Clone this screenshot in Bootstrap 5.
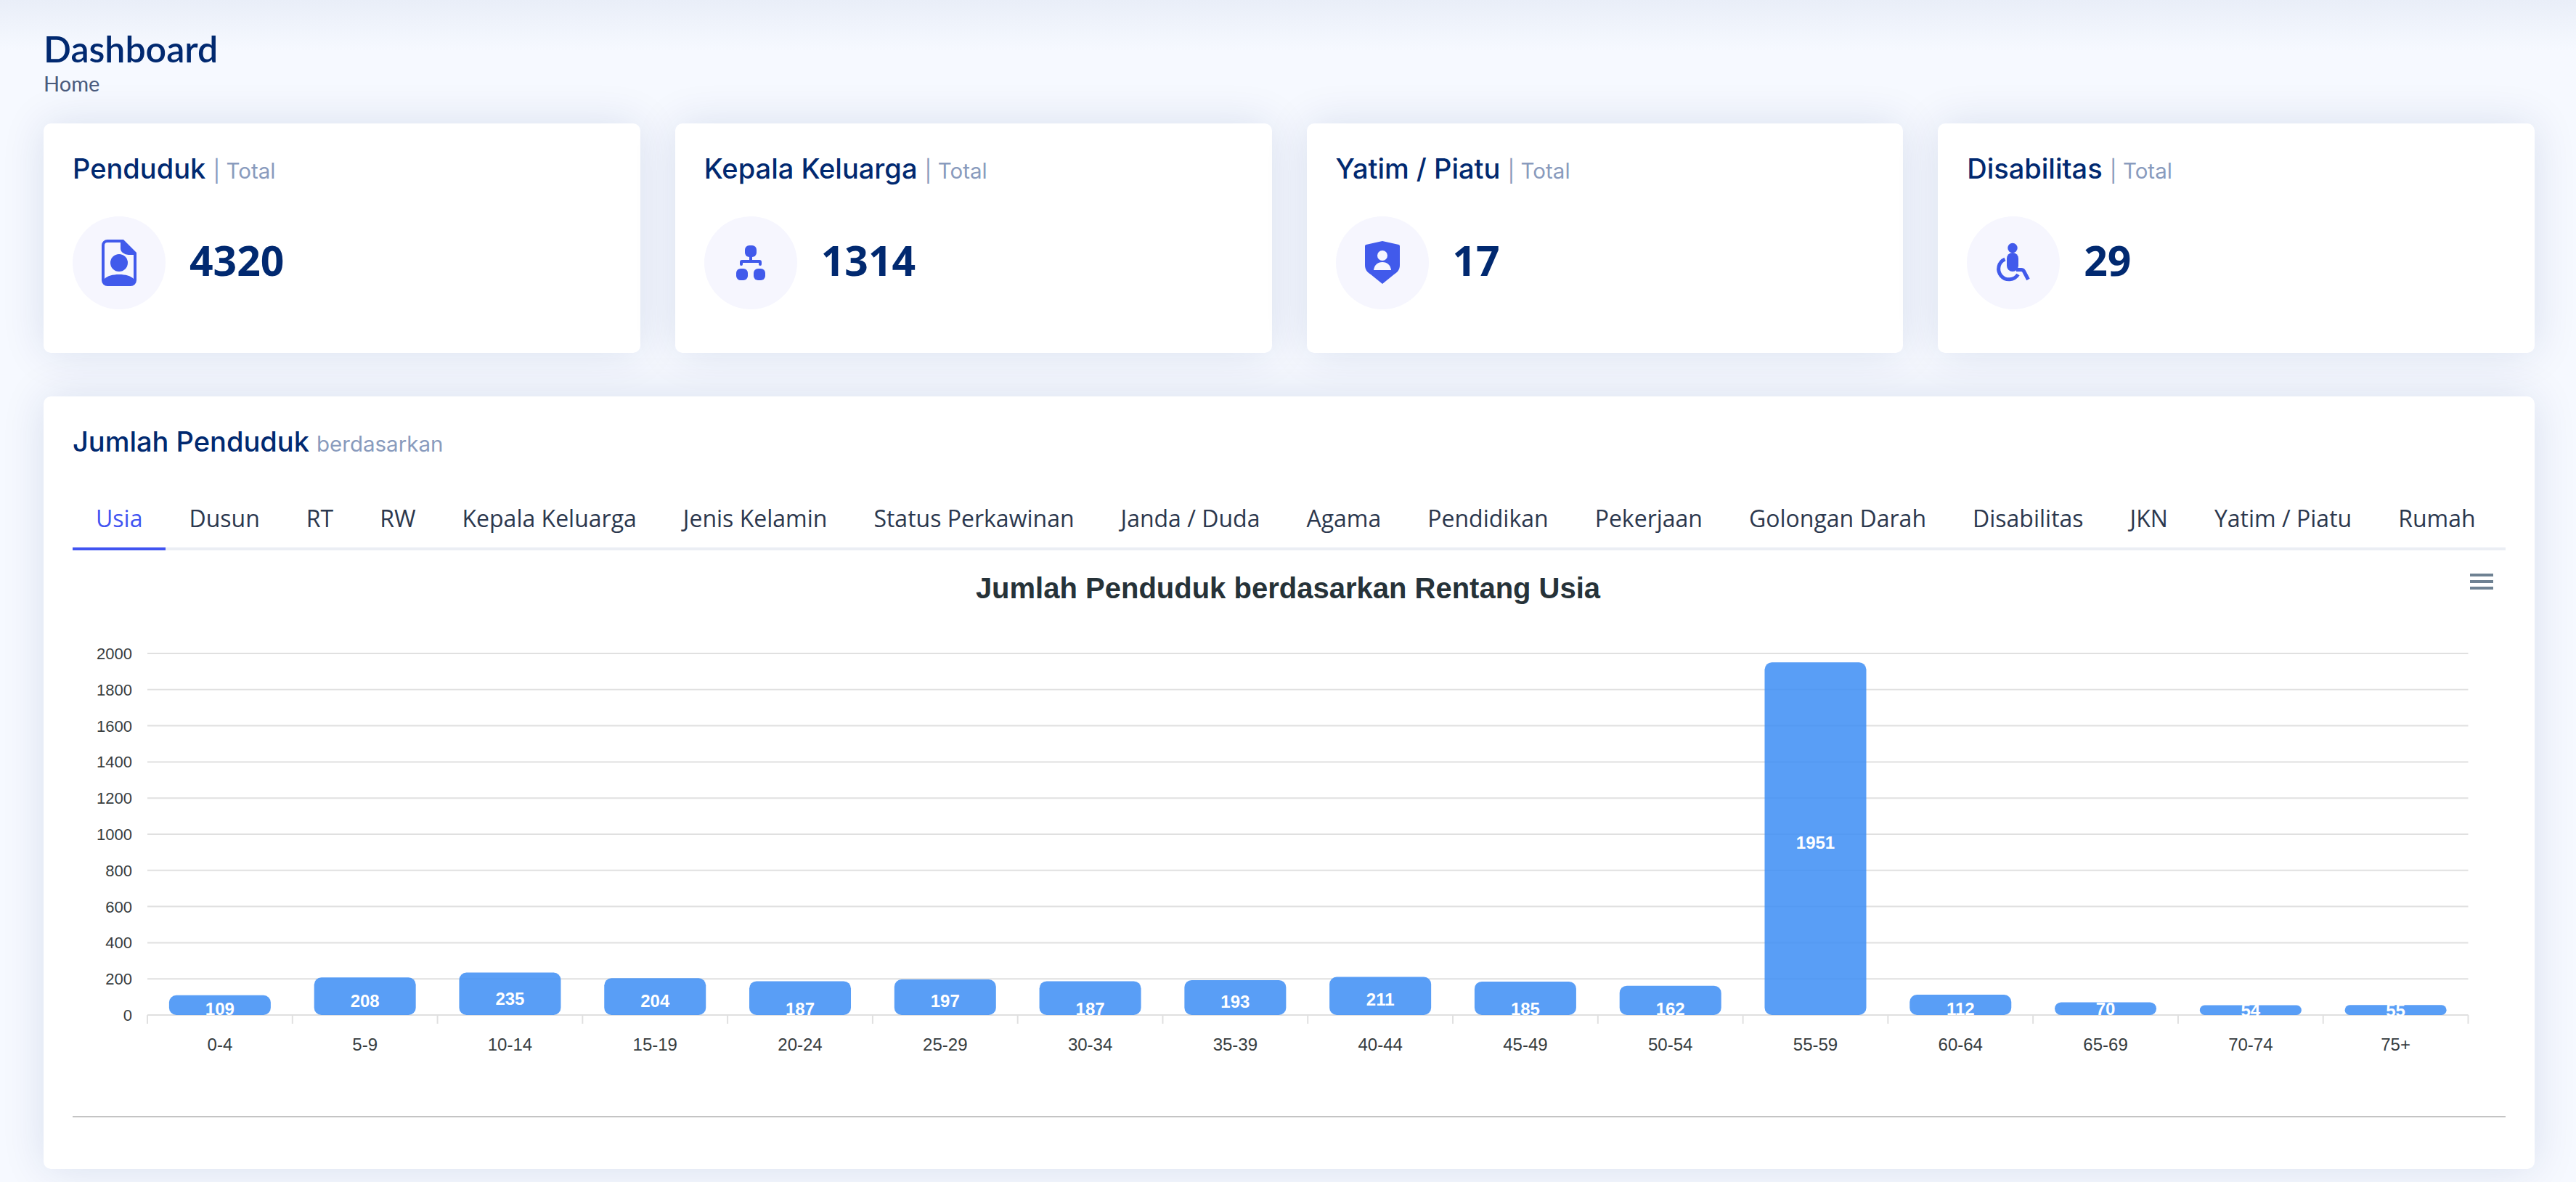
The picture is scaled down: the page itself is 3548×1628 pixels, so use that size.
<!DOCTYPE html>
<html lang="id">
<head>
    <meta charset="UTF-8">
    <meta name="viewport" content="width=device-width, initial-scale=1.0">
    <title>Dashboard</title>
    <link href="https://cdn.jsdelivr.net/npm/bootstrap@5.3.2/dist/css/bootstrap.min.css" rel="stylesheet">
    <style>
        html, body {
            height: 1628px;
            overflow: hidden;
        }
        body {
            background: linear-gradient(180deg, #e9eef8 0, #f6f9ff 70px) no-repeat #f6f9ff;
            font-family: "Open Sans", sans-serif;
            color: #444444;
        }
        .page-wrap {
            padding: 38px 57px 18px 60px;
        }
        .page-head {
            height: 132px;
        }
        .page-head h1 {
            font-family: Lato, sans-serif;
            font-size: 50px;
            font-weight: 600;
            line-height: 58px;
            margin: 0;
            color: #012970;
        }
        .page-head div {
            font-family: Lato, sans-serif;
            font-size: 29px;
            line-height: 40px;
            margin-top: -1px;
            color: #4a5a7c;
        }
        .stat-row {
            --bs-gutter-x: 48px;
            margin-bottom: 60px;
        }
        .stat-card, .main-card {
            border: 0;
            border-radius: 10px;
            box-shadow: 0 0 60px rgba(1, 41, 112, .12);
            background: #fff;
        }
        .stat-card {
            height: 316px;
            padding: 0 40px;
        }
        .box-title {
            font-family: Inter, sans-serif;
            font-size: 38px;
            font-weight: 500;
            line-height: 44px;
            color: #012970;
            margin: 0;
            padding: 40px 0 44px;
        }
        .box-title span {
            font-size: 29.5px;
            font-weight: 400;
            line-height: 1;
            color: #899bbd;
        }
        .stat-icon {
            width: 128px;
            height: 128px;
            border-radius: 50%;
            background: #f6f6fe;
            flex-shrink: 0;
        }
        .stat-icon svg {
            width: 64px;
            height: 64px;
            fill: #415aeb;
        }
        .stat-value {
            font-family: "Open Sans", sans-serif;
            font-size: 57px;
            font-weight: 700;
            line-height: 68px;
            color: #012970;
            margin-left: 33px;
            margin-top: -8px;
        }
        .main-card {
            height: 1064px;
            padding: 0 40px;
        }
        .main-card .box-title {
            padding: 40px 0 38px;
        }
        .tab-bar {
            flex-wrap: nowrap;
            border-bottom: 4px solid #ebeef4;
        }
        .tab-bar .nav-link {
            font-size: 32px;
            line-height: 48px;
            padding: 22px 32px 16px;
            margin-bottom: -4px;
            border: 0;
            border-bottom: 4px solid transparent;
            border-radius: 0;
            color: #2c384e;
            white-space: nowrap;
            background: none;
        }
        .tab-bar .nav-link.active {
            color: #4154f1;
            border-bottom-color: #4154f1;
        }
        .chart-box {
            display: block;
            width: 3352px;
            height: 779px;
        }
        .chart-box text {
            font-family: "Liberation Sans", Arial, sans-serif;
        }
        .chart-rule {
            margin: 0;
            border: 0;
            border-top: 2px solid #c4c4c4;
            opacity: 1;
        }
    </style>
</head>
<body>
    <div class="page-wrap">
        <div class="page-head">
            <h1>Dashboard</h1>
            <div>Home</div>
        </div>

        <div class="row stat-row">
            <div class="col-3">
                <div class="card stat-card">
                    <h5 class="box-title">Penduduk <span>| Total</span></h5>
                    <div class="d-flex align-items-center">
                        <div class="stat-icon d-flex align-items-center justify-content-center">
                            <svg viewBox="0 0 64 64"><path fill-rule="evenodd" d="M16 0h22l18 18v38a8 8 0 0 1-8 8H16a8 8 0 0 1-8-8V8a8 8 0 0 1 8-8Zm0 4a4 4 0 0 0-4 4v46c4-4 11-6 20-6s16 2 20 6V21h-7a11 9 0 0 1-11-9V4H16Z"/><circle cx="32" cy="32" r="12"/></svg>
                        </div>
                        <div class="stat-value">4320</div>
                    </div>
                </div>
            </div>
            <div class="col-3">
                <div class="card stat-card">
                    <h5 class="box-title">Kepala Keluarga <span>| Total</span></h5>
                    <div class="d-flex align-items-center">
                        <div class="stat-icon d-flex align-items-center justify-content-center">
                            <svg viewBox="0 0 64 64"><rect x="24" y="8" width="16" height="16" rx="6"/><rect x="12" y="40" width="16" height="16" rx="6"/><rect x="36" y="40" width="16" height="16" rx="6"/><path d="M30 22h4v6h10a3 3 0 0 1 3 3v3a2 2 0 0 1-4 0v-2H21v2a2 2 0 0 1-4 0v-3a3 3 0 0 1 3-3h10Z"/></svg>
                        </div>
                        <div class="stat-value">1314</div>
                    </div>
                </div>
            </div>
            <div class="col-3">
                <div class="card stat-card">
                    <h5 class="box-title">Yatim / Piatu <span>| Total</span></h5>
                    <div class="d-flex align-items-center">
                        <div class="stat-icon d-flex align-items-center justify-content-center">
                            <svg viewBox="0 0 64 64"><path fill-rule="evenodd" d="M32 2l22.5 5a2 2 0 0 1 1.5 2v26c0 6-3 10-8 13L32 61 16 48c-5-3-8-7-8-13V9a2 2 0 0 1 1.5-2L32 2Zm0 13a7 7 0 1 0 0 14 7 7 0 0 0 0-14ZM20 42h24c-1-7-5-11-12-11s-11 4-12 11Z"/></svg>
                        </div>
                        <div class="stat-value">17</div>
                    </div>
                </div>
            </div>
            <div class="col-3">
                <div class="card stat-card">
                    <h5 class="box-title">Disabilitas <span>| Total</span></h5>
                    <div class="d-flex align-items-center">
                        <div class="stat-icon d-flex align-items-center justify-content-center">
                            <svg viewBox="0 0 64 64"><circle cx="31" cy="11.5" r="6.7"/><rect x="23" y="18" width="16" height="26" rx="8"/><path d="M36 41.5h7a4 4 0 0 1 3.5 2L52.5 55" fill="none" stroke="#415aeb" stroke-width="5"/><path d="M20.5 27a14.5 14.5 0 1 0 18 21" fill="none" stroke="#415aeb" stroke-width="5"/></svg>
                        </div>
                        <div class="stat-value">29</div>
                    </div>
                </div>
            </div>
        </div>

        <div class="card main-card">
            <h5 class="box-title">Jumlah Penduduk <span>berdasarkan</span></h5>
            <ul class="nav tab-bar">
                <li class="nav-item"><a class="nav-link active" href="#">Usia</a></li>
                <li class="nav-item"><a class="nav-link" href="#">Dusun</a></li>
                <li class="nav-item"><a class="nav-link" href="#">RT</a></li>
                <li class="nav-item"><a class="nav-link" href="#">RW</a></li>
                <li class="nav-item"><a class="nav-link" href="#">Kepala Keluarga</a></li>
                <li class="nav-item"><a class="nav-link" href="#">Jenis Kelamin</a></li>
                <li class="nav-item"><a class="nav-link" href="#">Status Perkawinan</a></li>
                <li class="nav-item"><a class="nav-link" href="#">Janda / Duda</a></li>
                <li class="nav-item"><a class="nav-link" href="#">Agama</a></li>
                <li class="nav-item"><a class="nav-link" href="#">Pendidikan</a></li>
                <li class="nav-item"><a class="nav-link" href="#">Pekerjaan</a></li>
                <li class="nav-item"><a class="nav-link" href="#">Golongan Darah</a></li>
                <li class="nav-item"><a class="nav-link" href="#">Disabilitas</a></li>
                <li class="nav-item"><a class="nav-link" href="#">JKN</a></li>
                <li class="nav-item"><a class="nav-link" href="#">Yatim / Piatu</a></li>
                <li class="nav-item"><a class="nav-link" href="#">Rumah</a></li>
            </ul>
            <svg id="usia-chart" class="chart-box" viewBox="0 0 3352 779"></svg>
            <hr class="chart-rule">
        </div>
    </div>

    <script src="https://cdn.jsdelivr.net/npm/bootstrap@5.3.2/dist/js/bootstrap.bundle.min.js"></script>
    <script>
        // koordinat grafik relatif terhadap svg (x-100, y-758 di halaman)
        const chart = document.getElementById('usia-chart');
        const left = 103, right = 3299.5, base = 640, unit = 0.249;
        const colW = (right - left) / 16;
        const usia = [
            ['0-4', 109, 632], ['5-9', 208, 621], ['10-14', 235, 618], ['15-19', 204, 621],
            ['20-24', 187, 632], ['25-29', 197, 621], ['30-34', 187, 632], ['35-39', 193, 622],
            ['40-44', 211, 619], ['45-49', 185, 632], ['50-54', 162, 632], ['55-59', 1951, 403],
            ['60-64', 112, 632], ['65-69', 70, 632], ['70-74', 54, 634], ['75+', 55, 634]
        ];
        let out = '';

        function txt(x, y, str, attrs) {
            return `<text x="${x}" y="${y}" ${attrs}>${str}</text>`;
        }

        out += txt(1674, 66, 'Jumlah Penduduk berdasarkan Rentang Usia', 'text-anchor="middle" font-size="40" font-weight="700" fill="#263238"');
        out += `<path d="M3302 34h32M3302 43h32M3302 52h32" stroke="#6e8192" stroke-width="4"/>`;

        for (let i = 0; i <= 10; i++) {
            const y = base - i * 49.8;
            out += `<line x1="${left}" x2="${right}" y1="${y}" y2="${y}" stroke="#e0e0e0" stroke-width="2"/>`;
            out += txt(82, y + 8, i * 200, 'text-anchor="end" font-size="22" fill="#373d3f"');
        }

        usia.forEach((d, i) => {
            const cx = left + colW * (i + 0.5);
            const h = d[1] * unit;
            const r = Math.min(10, h / 2);
            out += `<line x1="${left + colW * i}" x2="${left + colW * i}" y1="${base}" y2="${base + 12}" stroke="#e0e0e0" stroke-width="2"/>`;
            out += `<rect x="${cx - 70}" y="${base - h}" width="140" height="${h}" rx="${r}" fill="#4090f5" fill-opacity=".87"/>`;
            out += txt(cx, d[2] + 8, d[1], 'text-anchor="middle" font-size="24" font-weight="700" fill="#fff"');
            out += txt(cx, 689, d[0], 'text-anchor="middle" font-size="24" fill="#373d3f"');
        });
        out += `<line x1="${right}" x2="${right}" y1="${base}" y2="${base + 12}" stroke="#e0e0e0" stroke-width="2"/>`;
        chart.innerHTML = out;
    </script>
</body>
</html>
